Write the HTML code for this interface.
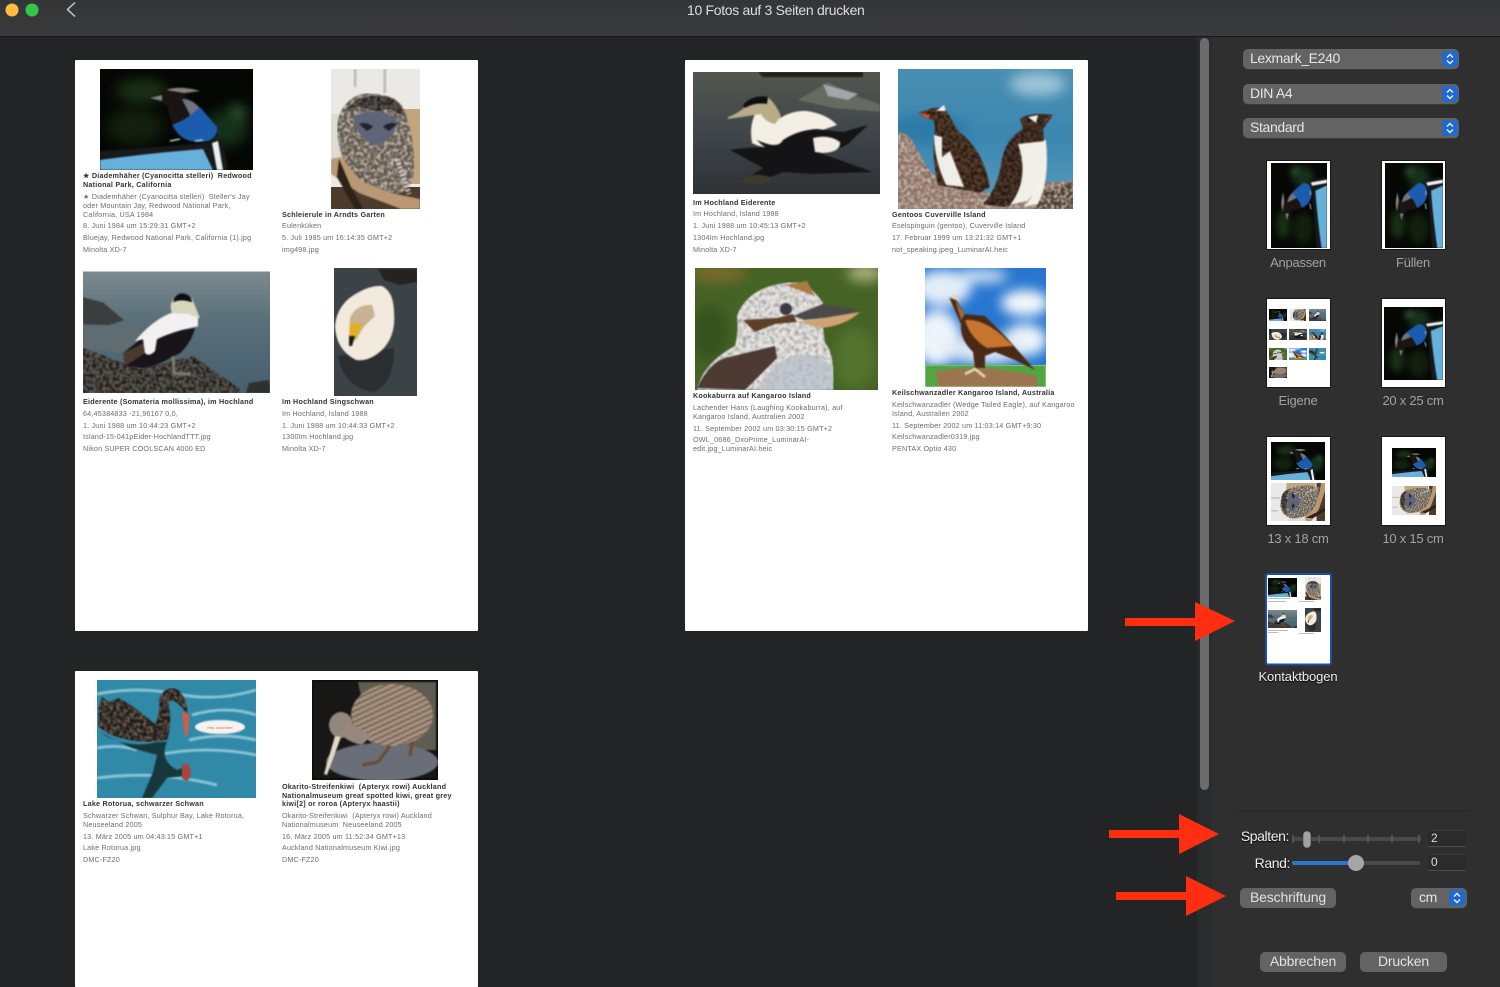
<!DOCTYPE html>
<html lang="de"><head><meta charset="utf-8"><title>10 Fotos auf 3 Seiten drucken</title>
<style>
html,body{margin:0;padding:0;background:#232425}
body{position:relative;width:1500px;height:987px;overflow:hidden;font-family:"Liberation Sans",sans-serif}
div{position:absolute}
.pg{background:#fff;border-radius:1px}
.l{font-size:7.2px;line-height:10px;margin-top:1px;white-space:pre;color:#6c6c6c;letter-spacing:.18px;filter:blur(.2px)}
.b{font-weight:bold;color:#333;letter-spacing:.22px}
.pop{background:#636363;border-radius:5px;height:20px;color:#e6e6e6;font-size:14px;letter-spacing:-.35px;line-height:19px;box-shadow:0 1px 0 #3a3a3a}
.step{background:#2268cf;border-radius:4px;width:16px;height:16px;top:2px}
.lab{color:#a2a2a2;font-size:13px;letter-spacing:-.25px;line-height:17px;text-align:center;width:100px}
.btn{background:#636363;border-radius:5px;height:20px;color:#e2e2e2;font-size:14px;letter-spacing:-.15px;line-height:19px;text-align:center}
.inp{background:#2b2b2b;border-bottom:1px solid #4c4c4c;border-top:1px solid #3a3a3a;width:38px;height:15px;color:#ddd;font-size:12px;line-height:15px;text-indent:3px}
</style></head><body>
<div style="left:0;top:0;width:1500px;height:36px;background:linear-gradient(#343536,#3a3a3c);border-bottom:1px solid #181818"></div>
<div style="left:1197px;top:37px;width:303px;height:950px;background:#2f2f30"></div>
<div style="left:1197px;top:37px;width:15px;height:950px;background:#2a2b2c"></div>
<div style="left:1200px;top:38px;width:9px;height:752px;background:#6c6c6c;border-radius:5px"></div>
<div style="left:687px;top:1px;color:#dedede;font-size:14px;letter-spacing:-.32px;line-height:18px;white-space:nowrap">10 Fotos auf 3 Seiten drucken</div>

<div class="pg" style="left:75px;top:60px;width:403px;height:571px"></div>
<div class="pg" style="left:685px;top:60px;width:403px;height:571px"></div>
<div class="pg" style="left:75px;top:671px;width:403px;height:316px"></div>

<svg width="1500" height="987" viewBox="0 0 1500 987" style="position:absolute;left:0;top:0">
<defs>
<filter id="s" x="-5%" y="-5%" width="110%" height="110%" color-interpolation-filters="sRGB"><feGaussianBlur stdDeviation=".85"/></filter>
<filter id="g" x="-50%" y="-50%" width="200%" height="200%" color-interpolation-filters="sRGB"><feGaussianBlur stdDeviation="6"/></filter>
<filter id="n" x="0" y="0" width="100%" height="100%" color-interpolation-filters="sRGB"><feTurbulence type="fractalNoise" baseFrequency=".3" numOctaves="2" seed="3" result="t"/><feColorMatrix in="t" type="matrix" values="0 0 0 0 .12 0 0 0 0 .09 0 0 0 0 .07 0 0 0 3 -1.100" result="d"/><feComposite in="d" in2="SourceGraphic" operator="in" result="dd"/><feMerge><feMergeNode in="SourceGraphic"/><feMergeNode in="dd"/></feMerge><feGaussianBlur stdDeviation=".7"/></filter>
<filter id="m" x="0" y="0" width="100%" height="100%" color-interpolation-filters="sRGB"><feTurbulence type="fractalNoise" baseFrequency=".3" numOctaves="2" seed="8" result="t"/><feColorMatrix in="t" type="matrix" values="0 0 0 0 .78 0 0 0 0 .74 0 0 0 0 .68 0 0 0 3 -1.200" result="d"/><feComposite in="d" in2="SourceGraphic" operator="in" result="dd"/><feMerge><feMergeNode in="SourceGraphic"/><feMergeNode in="dd"/></feMerge><feGaussianBlur stdDeviation=".7"/></filter>
<filter id="k" x="0" y="0" width="100%" height="100%" color-interpolation-filters="sRGB"><feTurbulence type="fractalNoise" baseFrequency=".25" numOctaves="2" seed="5" result="t"/><feColorMatrix in="t" type="matrix" values="0 0 0 0 .62 0 0 0 0 .62 0 0 0 0 .64 0 0 0 2.500 -1" result="d"/><feComposite in="d" in2="SourceGraphic" operator="in" result="dd"/><feMerge><feMergeNode in="SourceGraphic"/><feMergeNode in="dd"/></feMerge><feGaussianBlur stdDeviation=".7"/></filter>
<filter id="w" x="0" y="0" width="100%" height="100%" color-interpolation-filters="sRGB"><feTurbulence type="fractalNoise" baseFrequency=".3" numOctaves="2" seed="11" result="t"/><feColorMatrix in="t" type="matrix" values="0 0 0 0 .42 0 0 0 0 .36 0 0 0 0 .3 0 0 0 3 -1.100" result="d"/><feComposite in="d" in2="SourceGraphic" operator="in" result="dd"/><feMerge><feMergeNode in="SourceGraphic"/><feMergeNode in="dd"/></feMerge><feGaussianBlur stdDeviation=".7"/></filter>
<pattern id="kw" width="6" height="5" patternUnits="userSpaceOnUse" patternTransform="rotate(-25)"><rect width="6" height="5" fill="#a69280"/><path d="M0 1.500Q3 0 6 1.500" stroke="#6d5a4a" stroke-width="1.400" fill="none"/></pattern>

<symbol id="jay" viewBox="0 0 153 101" preserveAspectRatio="none"><rect width="153" height="101" fill="#050704"/>
<g filter="url(#g)"><ellipse cx="42" cy="22" rx="26" ry="12" fill="#1a3015"/><ellipse cx="35" cy="58" rx="28" ry="18" fill="#12200d"/><ellipse cx="136" cy="47" rx="10" ry="10" fill="#3f7340"/><ellipse cx="125" cy="60" rx="22" ry="18" fill="#16301a"/></g>
<g filter="url(#s)"><path d="M0 82L108 74L123 70L128 101H0Z" fill="#17191a"/><path d="M0 91Q50 84 103 80L113 101H0Z" fill="#66b0dc"/><path d="M112 74L118 72L123 101H117Z" fill="#e9eef0"/>
<path d="M50 29L62 25Q68 19 84 20L99 21L84 27L96 35Q113 50 118 67L106 72Q85 76 76 62Q68 50 68 38L60 32Z" fill="#1a1412"/>
<path d="M50 29L62 26L62 32Z" fill="#7d8486"/><path d="M66 21Q80 16 100 22L84 24Z" fill="#868380"/><path d="M82 30Q96 30 104 46L115 62L100 66Z" fill="#6f7480"/>
<path d="M72 56Q88 50 100 38L117 58Q118 68 108 72Q86 76 76 62Z" fill="#1c5cae"/><path d="M70 72L80 70M95 72L103 71" stroke="#bcc" stroke-width="1.500"/></g></symbol>

<symbol id="owl" viewBox="0 0 89 140" preserveAspectRatio="none"><rect width="89" height="140" fill="#ebe9e5"/><rect y="45" width="20" height="60" fill="#dedbd3"/><rect x="66" y="40" width="23" height="75" fill="#c3a67e"/><rect y="118" width="89" height="22" fill="#4d3b2c"/><path d="M24 0V18M54 0V24" stroke="#bdbdbb" stroke-width="3" fill="none" filter="url(#s)"/>
<path d="M8 75Q2 50 15 35Q28 20 50 26Q72 28 76 50Q86 80 82 110Q72 130 50 128Q18 122 14 100Z" fill="#5f574e" filter="url(#m)"/>
<path d="M14 42Q28 24 50 27Q70 30 74 48L60 40L45 42L28 38Z" fill="#5b5754" filter="url(#n)"/>
<g filter="url(#s)"><path d="M22 48Q44 36 66 50Q66 70 46 76Q26 72 22 48Z" fill="#5f6579"/><path d="M28 55Q36 52 42 58L36 62Z" fill="#1f222b"/><path d="M52 58Q58 52 66 55L58 62Z" fill="#1f222b"/><path d="M0 90L10 88L30 112L60 124L89 130V140H70L28 124L0 105Z" fill="#b99873"/><path d="M8 90L20 118L32 140H24L6 108Z" fill="#2d2118"/><path d="M66 90L78 125" stroke="#d3d0ca" stroke-width="5" stroke-dasharray="2 2"/></g></symbol>

<symbol id="eid" viewBox="0 0 187 122" preserveAspectRatio="none"><defs><linearGradient id="w1" x1="0" y1="0" x2="0" y2="1"><stop offset="0" stop-color="#7b8a90"/><stop offset=".4" stop-color="#5a6f79"/><stop offset="1" stop-color="#46606e"/></linearGradient></defs><rect width="187" height="122" fill="url(#w1)"/>
<g filter="url(#s)"><path d="M0 26L20 31L41 49L25 54L0 53Z" fill="#3b3d3f"/><path d="M0 53L55 55L75 85L0 78Z" fill="#5f6c72"/><path d="M166 112L186 109L187 122H163Z" fill="#2f2f2f"/></g>
<path d="M0 77L57 98L110 85L157 118V122H0Z" fill="#5a5854" filter="url(#n)"/>
<g filter="url(#s)"><path d="M64 63L112 57Q108 72 97 82L87 87Q72 96 60 97L42 95L40 82Z" fill="#17141a"/><path d="M40 82L64 70L62 82L42 95Z" fill="#4a3a2e"/><path d="M52 70Q68 50 87 42Q100 40 115 45L115 55Q90 60 74 68L72 80Q66 86 62 82L60 68Z" fill="#f3f0f2"/><path d="M89 42Q86 34 90 28L109 27L117 47L108 44Q100 40 89 42Z" fill="#d8d7bd"/><path d="M90 31Q92 22 100 22Q108 23 109 31Q98 27 90 31Z" fill="#0e0e10"/><path d="M90 85L91 102L108 103" stroke="#7b7d68" stroke-width="3" fill="none"/></g></symbol>

<symbol id="swa" viewBox="0 0 83 128" preserveAspectRatio="none"><rect width="83" height="128" fill="#3c4347"/><g filter="url(#s)"><path d="M44 1H83V14L66 17L50 12Z" fill="#242322"/><path d="M4 88Q10 120 40 124Q60 116 60 80Z" fill="#2a2e30"/><path d="M1 58Q3 35 25 24Q38 17 48 18Q60 24 60 45Q62 68 48 82Q35 94 22 92Q2 82 1 58Z" fill="#f1eadd"/><path d="M16 50Q22 36 38 37L41 48Q33 55 29 60L22 72L15 72Z" fill="#c9b293"/><path d="M16 56L29 55L21 72L15 74Z" fill="#e3ae26"/><path d="M15 68L21 68L18 78H15Z" fill="#1b1b1b"/></g></symbol>

<symbol id="eis" viewBox="0 0 187 122" preserveAspectRatio="none"><defs><linearGradient id="w2" x1="0" y1="0" x2="0" y2="1"><stop offset="0" stop-color="#53574f"/><stop offset=".5" stop-color="#40454a"/><stop offset="1" stop-color="#2e3235"/></linearGradient></defs><rect width="187" height="122" fill="url(#w2)"/>
<g filter="url(#s)"><path d="M65 0H170V5H70Z" fill="#24211d"/><path d="M105 28L135 10L165 25L187 32V40L140 36Z" fill="#666a60"/><path d="M130 12L165 22L155 28L135 24Z" fill="#a0a6aa"/>
<path d="M37 78Q70 72 124 80L180 100L120 102L90 100L60 112L48 110L70 96Z" fill="#141416"/><path d="M47 110Q60 98 80 106Q75 115 47 110Z" fill="#3f3a2c"/>
<path d="M59 71Q56 55 62 42Q70 38 87 46Q100 38 114 39Q134 42 144 53L124 60Q100 62 87 72Q70 78 59 71Z" fill="#f3efe2"/><path d="M64 68Q85 78 90 68Q105 58 124 57L150 60L175 53L155 72Q145 78 124 81Q100 84 87 79Q72 78 64 68Z" fill="#141417"/><path d="M120 66Q136 62 147 70Q148 80 130 81L122 80Z" fill="#f1ede4"/><path d="M35 45Q44 42 52 35Q60 22 76 26Q84 34 88 44L82 52Q72 50 68 42Q55 44 35 47Z" fill="#b8ad86"/><path d="M50 33Q60 22 75 25L74 32Q62 30 52 36Z" fill="#0e0e10"/></g></symbol>

<symbol id="gen" viewBox="0 0 175 140" preserveAspectRatio="none"><defs><linearGradient id="sk" x1="0" y1="0" x2="0" y2="1"><stop offset="0" stop-color="#4a8fb2"/><stop offset=".5" stop-color="#3b86b0"/><stop offset="1" stop-color="#5d9cbe"/></linearGradient></defs><rect width="175" height="140" fill="url(#sk)"/>
<g filter="url(#g)"><ellipse cx="140" cy="15" rx="28" ry="12" fill="#9cc4d6"/><ellipse cx="30" cy="60" rx="40" ry="14" fill="#2d7aa6"/></g>
<path d="M0 62L12 68L30 100L45 115L95 125L120 115L175 112V140H0Z" fill="#8e6f66" filter="url(#m)"/><path d="M135 125L175 113V140H135Z" fill="#4c3a2e" filter="url(#m)"/>
<path d="M20 44L30 41Q38 36 48 41L60 62Q85 80 92 118L82 124L40 116Q34 90 36 70Q38 58 36 52Z" fill="#5b3e29" filter="url(#n)"/>
<path d="M85 135Q100 120 104 90Q108 70 125 60L122 50Q134 42 155 46L145 60L146 70Q152 110 135 130L105 138Z" fill="#52382a" filter="url(#n)"/>
<g filter="url(#s)"><path d="M20 43L32 46L30 50Z" fill="#d8562a"/><path d="M36 66L44 68L44 88L52 82L66 118L48 116Q36 90 36 66Z" fill="#f0eee8"/><path d="M38 42L46 36L48 42Z" fill="#f2f2f2"/>
<path d="M125 138Q142 125 146 70L148 72Q152 110 140 135Z" fill="#f2f1ea"/><path d="M120 75L147 72Q150 108 130 132L112 136Q132 110 120 75Z" fill="#f0efe8"/><path d="M148 50L158 45L146 52Z" fill="#cf6a2e"/><path d="M130 48L140 46L138 54Z" fill="#eee"/></g></symbol>

<symbol id="koo" viewBox="0 0 183 122" preserveAspectRatio="none"><rect width="183" height="122" fill="#466326"/>
<g filter="url(#g)"><ellipse cx="22" cy="5" rx="30" ry="9" fill="#7a6b2a"/><ellipse cx="170" cy="5" rx="18" ry="8" fill="#b0b482"/><ellipse cx="160" cy="90" rx="20" ry="30" fill="#54742e"/><ellipse cx="15" cy="65" rx="18" ry="28" fill="#37521e"/></g>
<path d="M2 122Q8 95 40 78Q44 62 42 48Q52 20 90 15Q112 11 128 35L128 60L130 75Q140 85 138 122Z" fill="#e8e5df" filter="url(#k)"/>
<g filter="url(#s)"><path d="M2 120Q14 95 30 90L80 78L82 90L50 122Z" fill="#4c3a33"/><path d="M82 96Q110 76 138 98V122H60Z" fill="#b5bdc9" opacity=".7"/><path d="M48 52L82 50L98 46L102 54L80 56L60 64Z" fill="#5c3f28"/><path d="M98 48L128 36L165 42L145 48L110 52Z" fill="#4c4a46"/><path d="M104 54L165 44Q150 58 125 60Z" fill="#cfa473"/><circle cx="91" cy="41" r="6" fill="#3b3a42"/><path d="M90 17L112 13L120 28Z" fill="#a87c45"/></g></symbol>

<symbol id="eag" viewBox="0 0 121 119" preserveAspectRatio="none"><rect width="121" height="97" fill="#2876d0"/>
<g filter="url(#g)"><ellipse cx="18" cy="20" rx="28" ry="18" fill="#e4eef8"/><ellipse cx="100" cy="35" rx="24" ry="13" fill="#f4f7fa"/><ellipse cx="12" cy="70" rx="24" ry="28" fill="#eef4fa"/><ellipse cx="100" cy="72" rx="22" ry="16" fill="#eef4f8"/><ellipse cx="60" cy="82" rx="40" ry="14" fill="#dbe8f4"/><ellipse cx="55" cy="8" rx="28" ry="7" fill="#cfe2f2"/></g>
<g filter="url(#s)"><rect y="97" width="121" height="22" fill="#52a640"/><path d="M10 104Q50 94 112 108L112 119H14Z" fill="#9b7550"/><path d="M24 29L30 30L40 46L60 48L82 70L110 102L90 92L70 84L60 88L60 100L50 100L48 84Q35 72 36 56Z" fill="#4a2a14"/><path d="M40 52Q62 50 88 78L62 80Q45 70 40 52Z" fill="#c5752e"/><path d="M30 32L40 46L36 52Z" fill="#9c6a36"/><path d="M22 29L32 27L34 33Z" fill="#ddd4c4"/><path d="M40 106L50 101L60 109" stroke="#e8d9b8" stroke-width="2.500" fill="none"/></g></symbol>

<symbol id="bsw" viewBox="0 0 159 118" preserveAspectRatio="none"><rect width="159" height="118" fill="#3189a8"/><g stroke="#a4d6e2" stroke-width="3" fill="none" opacity=".75" filter="url(#s)"><path d="M0 14Q40 6 80 14T159 10"/><path d="M60 75Q110 65 159 75"/><path d="M0 98Q60 90 120 105"/><path d="M95 35Q130 25 159 35"/><path d="M92 60Q125 52 159 60"/><path d="M0 68Q20 64 40 70"/></g>
<path d="M1 30L5 17L12 22L22 18L38 28L58 44Q64 30 62 20Q66 8 76 8Q88 10 91 34L85 28Q78 18 71 22Q76 42 70 60L50 62Q15 60 1 46Z" fill="#1c1817" filter="url(#w)"/>
<g filter="url(#s)"><path d="M85 32L92 34L91 55L88 56Z" fill="#d95a3d"/><path d="M2 52Q30 70 60 62L70 62Q62 80 80 90L85 88L86 96L70 98L55 118H45L56 92L60 75L35 68Z" fill="#16383a"/><path d="M85 85Q92 80 94 92Q92 106 85 98Z" fill="#a8463c"/><ellipse cx="123" cy="47" rx="25" ry="7" fill="#f6f3ee"/></g><text x="123" y="49" font-size="3.200" fill="#d36a5e" text-anchor="middle" font-family="Liberation Sans">Hello, down there!</text></symbol>

<symbol id="kiw" viewBox="0 0 126 100" preserveAspectRatio="none"><rect width="126" height="100" fill="#0e0e0d"/><rect x="2" y="2" width="122" height="96" fill="#171716"/>
<g filter="url(#s)"><path d="M46 2H124V70H60Z" fill="#5f5c50"/><ellipse cx="70" cy="82" rx="56" ry="19" fill="#6a6e78"/></g>
<ellipse cx="80" cy="35" rx="41" ry="31" fill="url(#kw)" filter="url(#s)"/>
<g filter="url(#s)"><ellipse cx="29" cy="45" rx="12" ry="13" fill="#93867c"/><path d="M36 38Q45 50 60 55L50 65Q36 62 30 55Z" fill="#96887c"/><path d="M23 56L29 57L15 95L12 94Z" fill="#e2dcc6"/><path d="M78 66L66 82L50 85M100 62L98 76" stroke="#6e4a30" stroke-width="3" fill="none"/></g></symbol>
</defs>

<use href="#jay" x="100" y="69" width="153" height="101"/>
<use href="#owl" x="331" y="69" width="89" height="140"/>
<use href="#eid" x="83" y="271.500" width="187" height="121.500"/>
<use href="#swa" x="334" y="268" width="83" height="128"/>
<use href="#eis" x="693" y="72" width="187" height="122"/>
<use href="#gen" x="898" y="69" width="175" height="140"/>
<use href="#koo" x="695" y="268" width="183" height="122"/>
<use href="#eag" x="925" y="268" width="121" height="119"/>
<use href="#bsw" x="97" y="680" width="159" height="118"/>
<use href="#kiw" x="312" y="680" width="126" height="100"/>

<g stroke="#161616" stroke-width="1">
<rect x="1266.500" y="160.500" width="64" height="89" fill="#fff"/><rect x="1381.500" y="160.500" width="64" height="89" fill="#fff"/><rect x="1266.500" y="298.500" width="64" height="89" fill="#fff"/><rect x="1381.500" y="298.500" width="64" height="89" fill="#fff"/><rect x="1266.500" y="436.500" width="64" height="89" fill="#fff"/><rect x="1381.500" y="436.500" width="64" height="89" fill="#fff"/></g>

<svg x="1271" y="163" width="56" height="85" viewBox="0 0 101 153" preserveAspectRatio="none"><g transform="translate(0,153) rotate(-90)"><use href="#jay" width="153" height="101"/></g></svg>
<svg x="1385" y="163" width="58" height="85" viewBox="0 0 101 153" preserveAspectRatio="none"><g transform="translate(0,153) rotate(-90)"><use href="#jay" width="153" height="101"/></g></svg>
<svg x="1384" y="307" width="59" height="73" viewBox="0 0 101 153" preserveAspectRatio="none"><g transform="translate(0,153) rotate(-90)"><use href="#jay" width="153" height="101"/></g></svg>

<use href="#jay" x="1271" y="442" width="54" height="38"/>
<svg x="1271" y="483" width="54" height="38" viewBox="0 0 140 89" preserveAspectRatio="none"><g transform="translate(0,89) rotate(-90)"><use href="#owl" width="89" height="140"/></g></svg>
<use href="#jay" x="1392" y="448" width="44" height="29"/>
<svg x="1392" y="486" width="44" height="29" viewBox="0 0 140 89" preserveAspectRatio="none"><g transform="translate(0,89) rotate(-90)"><use href="#owl" width="89" height="140"/></g></svg>

<use href="#jay" x="1269" y="309" width="18" height="12"/>
<svg x="1290" y="309" width="16" height="12" viewBox="0 0 140 89" preserveAspectRatio="none"><g transform="translate(0,89) rotate(-90)"><use href="#owl" width="89" height="140"/></g></svg>
<use href="#eid" x="1309" y="309" width="17" height="12"/>
<svg x="1269" y="329" width="18" height="11" viewBox="0 0 128 83" preserveAspectRatio="none"><g transform="translate(0,83) rotate(-90)"><use href="#swa" width="83" height="128"/></g></svg>
<use href="#eis" x="1289" y="329" width="18" height="11"/>
<use href="#gen" x="1309" y="329" width="17" height="11"/>
<use href="#koo" x="1269" y="348" width="18" height="12"/>
<use href="#eag" x="1289" y="348" width="18" height="12"/>
<use href="#bsw" x="1309" y="348" width="17" height="12"/>
<use href="#kiw" x="1269" y="367" width="18" height="11"/>

<rect x="1266" y="574" width="65" height="90.500" rx="2" fill="#fff" stroke="#1c50a8" stroke-width="2"/>
<use href="#jay" x="1268" y="578" width="29" height="19"/>
<use href="#owl" x="1305" y="577" width="16" height="23"/>
<use href="#eid" x="1268" y="610" width="29" height="18"/>
<use href="#swa" x="1305" y="608" width="16" height="24"/>
<g fill="#bbb"><rect x="1268" y="598" width="22" height="1"/><rect x="1268" y="601" width="18" height="1"/><rect x="1299" y="601" width="15" height="1"/><rect x="1268" y="630" width="20" height="1"/><rect x="1268" y="632" width="10" height="1"/><rect x="1299" y="633" width="15" height="1"/></g>

<circle cx="12" cy="10" r="6.500" fill="#fdbc40"/><circle cx="32" cy="10" r="6.500" fill="#34c84a"/>
<path d="M75 2.500L67.500 9.500L75 16.500" fill="none" stroke="#c9c9c9" stroke-width="1.500"/>
<path d="M1236 811H1470" stroke="#262626"/>

<g stroke="#4a4a4a" stroke-width="4" stroke-linecap="round"><path d="M1294 839H1419" /></g>
<g stroke="#5c5c5c" stroke-width="1.500"><path d="M1293 835V843M1319 835V843M1344 835V843M1368 835V843M1392 835V843M1419 835V843"/></g>
<rect x="1303" y="831" width="8" height="17" rx="4" fill="#a2a2a2" stroke="#2a2a2a" stroke-width=".5"/>
<path d="M1294 863H1418" stroke="#4a4a4a" stroke-width="4" stroke-linecap="round"/><path d="M1294 863H1356" stroke="#2f74cf" stroke-width="4" stroke-linecap="round"/>
<circle cx="1356" cy="863" r="8" fill="#a6a6a6"/>

<g fill="#ff2e10"><path d="M1125 618H1195V602L1235 621L1195 641V626H1125Z"/><path d="M1109 830H1179V814L1219 834L1179 854V838H1109Z"/><path d="M1116 892H1186V876L1226 896L1186 916V900H1116Z"/></g>
</svg>

<div class="l b" style="left:83px;top:170px">★ Diademhäher (Cyanocitta stelleri)  Redwood</div>
<div class="l b" style="left:83px;top:179px">National Park, California</div>
<div class="l" style="left:83px;top:191px">★ Diademhäher (Cyanocitta stelleri)  Steller's Jay</div>
<div class="l" style="left:83px;top:200px">oder Mountain Jay, Redwood National Park,</div>
<div class="l" style="left:83px;top:209px">California, USA 1984</div>
<div class="l" style="left:83px;top:220px">8. Juni 1984 um 15:29:31 GMT+2</div>
<div class="l" style="left:83px;top:232px">Bluejay, Redwood National Park, California (1).jpg</div>
<div class="l" style="left:83px;top:244px">Minolta XD-7</div>

<div class="l b" style="left:282px;top:209px">Schleierule in Arndts Garten</div>
<div class="l" style="left:282px;top:220px">Eulenküken</div>
<div class="l" style="left:282px;top:232px">5. Juli 1985 um 16:14:35 GMT+2</div>
<div class="l" style="left:282px;top:244px">img498.jpg</div>

<div class="l b" style="left:83px;top:396px">Eiderente (Somateria mollissima), im Hochland</div>
<div class="l" style="left:83px;top:408px">64,45384833 -21,96167 0,0,</div>
<div class="l" style="left:83px;top:420px">1. Juni 1988 um 10:44:23 GMT+2</div>
<div class="l" style="left:83px;top:431px">Island-15-041pEider-HochlandTTT.jpg</div>
<div class="l" style="left:83px;top:443px">Nikon SUPER COOLSCAN 4000 ED</div>

<div class="l b" style="left:282px;top:396px">Im Hochland Singschwan</div>
<div class="l" style="left:282px;top:408px">Im Hochland, Island 1988</div>
<div class="l" style="left:282px;top:420px">1. Juni 1988 um 10:44:33 GMT+2</div>
<div class="l" style="left:282px;top:431px">1300Im Hochland.jpg</div>
<div class="l" style="left:282px;top:443px">Minolta XD-7</div>

<div class="l b" style="left:693px;top:197px">Im Hochland Eiderente</div>
<div class="l" style="left:693px;top:208px">Im Hochland, Island 1988</div>
<div class="l" style="left:693px;top:220px">1. Juni 1988 um 10:45:13 GMT+2</div>
<div class="l" style="left:693px;top:232px">1304Im Hochland.jpg</div>
<div class="l" style="left:693px;top:244px">Minolta XD-7</div>

<div class="l b" style="left:892px;top:209px">Gentoos Cuverville Island</div>
<div class="l" style="left:892px;top:220px">Eselspinguin (gentoo), Cuverville Island</div>
<div class="l" style="left:892px;top:232px">17. Februar 1999 um 13:21:32 GMT+1</div>
<div class="l" style="left:892px;top:244px">not_speaking.jpeg_LuminarAI.heic</div>

<div class="l b" style="left:693px;top:390px">Kookaburra auf Kangaroo Island</div>
<div class="l" style="left:693px;top:402px">Lachender Hans (Laughing Kookaburra), auf</div>
<div class="l" style="left:693px;top:411px">Kangaroo Island, Australien 2002</div>
<div class="l" style="left:693px;top:423px">11. September 2002 um 03:30:15 GMT+2</div>
<div class="l" style="left:693px;top:434px">OWL_0686_DxoPrime_LuminarAI-</div>
<div class="l" style="left:693px;top:443px">edit.jpg_LuminarAI.heic</div>

<div class="l b" style="left:892px;top:387px">Keilschwanzadler Kangaroo Island, Australia</div>
<div class="l" style="left:892px;top:399px">Keilschwanzadler (Wedge Tailed Eagle), auf Kangaroo</div>
<div class="l" style="left:892px;top:408px">Island, Australien 2002</div>
<div class="l" style="left:892px;top:420px">11. September 2002 um 11:03:14 GMT+9:30</div>
<div class="l" style="left:892px;top:431px">Keilschwanzadler0319.jpg</div>
<div class="l" style="left:892px;top:443px">PENTAX Optio 430</div>

<div class="l b" style="left:83px;top:798px">Lake Rotorua, schwarzer Schwan</div>
<div class="l" style="left:83px;top:810px">Schwarzer Schwan, Sulphur Bay, Lake Rotorua,</div>
<div class="l" style="left:83px;top:819px">Neuseeland 2005</div>
<div class="l" style="left:83px;top:831px">13. März 2005 um 04:43:15 GMT+1</div>
<div class="l" style="left:83px;top:842px">Lake Rotorua.jpg</div>
<div class="l" style="left:83px;top:854px">DMC-FZ20</div>

<div class="l b" style="left:282px;top:781px">Okarito-Streifenkiwi  (Apteryx rowi) Auckland</div>
<div class="l b" style="left:282px;top:790px">Nationalmuseum great spotted kiwi, great grey</div>
<div class="l b" style="left:282px;top:798px">kiwi[2] or roroa (Apteryx haastii)</div>
<div class="l" style="left:282px;top:810px">Okarito-Streifenkiwi  (Apteryx rowi) Auckland</div>
<div class="l" style="left:282px;top:819px">Nationalmuseum  Neuseeland 2005</div>
<div class="l" style="left:282px;top:831px">16. März 2005 um 11:52:34 GMT+13</div>
<div class="l" style="left:282px;top:842px">Auckland Nationalmuseum Kiwi.jpg</div>
<div class="l" style="left:282px;top:854px">DMC-FZ20</div>

<div class="pop" style="left:1243px;top:49px;width:216px"><span style="position:absolute;left:7px">Lexmark_E240</span><div class="step" style="left:199px"><svg width="16" height="16" viewBox="0 0 16 16"><path d="M5 6.500L8 3.500L11 6.500M5 9.500L8 12.500L11 9.500" fill="none" stroke="#eef" stroke-width="1.400"/></svg></div></div>
<div class="pop" style="left:1243px;top:84px;width:216px"><span style="position:absolute;left:7px">DIN A4</span><div class="step" style="left:199px"><svg width="16" height="16" viewBox="0 0 16 16"><path d="M5 6.500L8 3.500L11 6.500M5 9.500L8 12.500L11 9.500" fill="none" stroke="#eef" stroke-width="1.400"/></svg></div></div>
<div class="pop" style="left:1243px;top:118px;width:216px"><span style="position:absolute;left:7px">Standard</span><div class="step" style="left:199px"><svg width="16" height="16" viewBox="0 0 16 16"><path d="M5 6.500L8 3.500L11 6.500M5 9.500L8 12.500L11 9.500" fill="none" stroke="#eef" stroke-width="1.400"/></svg></div></div>

<div class="lab" style="left:1248px;top:254px">Anpassen</div>
<div class="lab" style="left:1363px;top:254px">Füllen</div>
<div class="lab" style="left:1248px;top:392px">Eigene</div>
<div class="lab" style="left:1363px;top:392px">20 x 25 cm</div>
<div class="lab" style="left:1248px;top:530px">13 x 18 cm</div>
<div class="lab" style="left:1363px;top:530px">10 x 15 cm</div>
<div class="lab" style="left:1248px;top:668px;color:#eee;letter-spacing:-.1px;text-shadow:0 1px 1px #000">Kontaktbogen</div>

<div style="left:1220px;top:828px;width:69px;text-align:right;color:#eee;font-size:14px;letter-spacing:-.4px;line-height:17px;text-shadow:0 1px 1px #000">Spalten:</div>
<div style="left:1220px;top:855px;width:70px;text-align:right;color:#eee;font-size:14px;letter-spacing:-.4px;line-height:17px;text-shadow:0 1px 1px #000">Rand:</div>
<div class="inp" style="left:1428px;top:830px">2</div>
<div class="inp" style="left:1428px;top:854px">0</div>

<div class="btn" style="left:1240px;top:888px;width:96px">Beschriftung</div>
<div class="pop" style="left:1411px;top:888px;width:56px"><span style="position:absolute;left:8px">cm</span><div class="step" style="left:38px"><svg width="16" height="16" viewBox="0 0 16 16"><path d="M5 6.500L8 3.500L11 6.500M5 9.500L8 12.500L11 9.500" fill="none" stroke="#eef" stroke-width="1.400"/></svg></div></div>
<div class="btn" style="left:1260px;top:952px;width:86px">Abbrechen</div>
<div class="btn" style="left:1360px;top:952px;width:87px">Drucken</div>
</body></html>
